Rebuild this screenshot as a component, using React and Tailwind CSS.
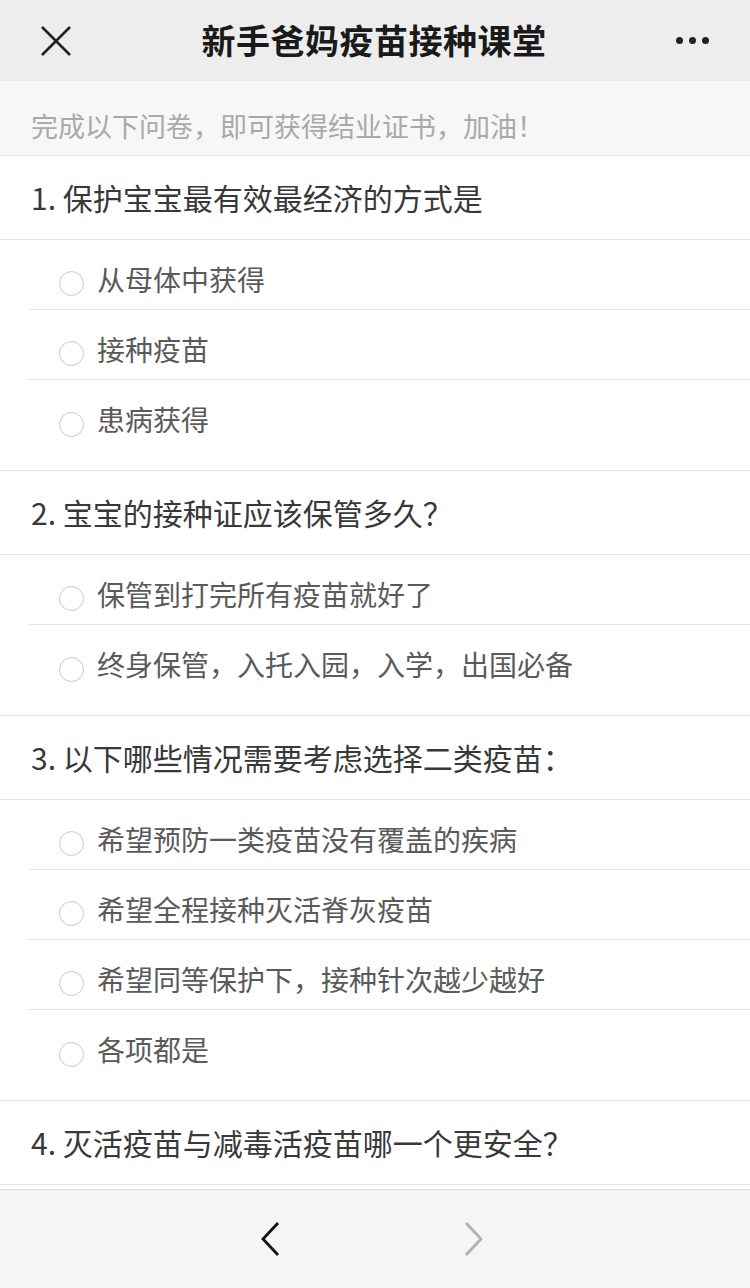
import React from 'react'

const questions = [
  {
    title: '1. 保护宝宝最有效最经济的方式是',
    options: ['从母体中获得', '接种疫苗', '患病获得'],
  },
  {
    title: '2. 宝宝的接种证应该保管多久？',
    options: ['保管到打完所有疫苗就好了', '终身保管，入托入园，入学，出国必备'],
  },
  {
    title: '3. 以下哪些情况需要考虑选择二类疫苗：',
    options: ['希望预防一类疫苗没有覆盖的疾病', '希望全程接种灭活脊灰疫苗', '希望同等保护下，接种针次越少越好', '各项都是'],
  },
  {
    title: '4. 灭活疫苗与减毒活疫苗哪一个更安全？',
    options: [],
  },
]

function Question({ q, last }) {
  return (
    <div className={last ? '' : 'border-b border-[#e3e3e3]'}>
      <div className="h-[84px] flex items-center px-[31px] text-[30px] text-[#383838] border-b border-[#e6e6e6]">
        {q.title}
      </div>
      {q.options.length > 0 && (
        <div className="pb-[20px]">
          {q.options.map((o, i) => (
            <div key={i} className={'ml-[28px] h-[70px] flex items-center pt-[8px] ' + (i < q.options.length - 1 ? 'border-b border-[#e6e6e6]' : '')}>
              <span className="ml-[31px] mt-[10px] w-[25px] h-[25px] rounded-full border-[1.5px] border-[#c9c9c9] shrink-0"></span>
              <span className="ml-[13px] text-[28px] text-[#5a5a5a]">{o}</span>
            </div>
          ))}
        </div>
      )}
    </div>
  )
}

export default function App() {
  return (
    <div className="w-[750px] h-[1288px] flex flex-col bg-white overflow-hidden" style={{ fontFamily: '"Noto Sans CJK SC", "Noto Sans", sans-serif' }}>
      {/* Header */}
      <div className="h-[81px] shrink-0 bg-[#ededed] flex items-center justify-between px-[40px]">
        <svg width="32" height="32" viewBox="0 0 32 32">
          <path d="M2 2 L30 30 M30 2 L2 30" stroke="#222" strokeWidth="2.6" fill="none" />
        </svg>
        <div className="text-[34px] font-bold text-[#1a1a1a] tracking-[0.5px] -mt-[2px]">新手爸妈疫苗接种课堂</div>
        <div className="flex gap-[6px] w-[34px]">
          <span className="w-[7px] h-[7px] rounded-full bg-[#222]"></span>
          <span className="w-[7px] h-[7px] rounded-full bg-[#222]"></span>
          <span className="w-[7px] h-[7px] rounded-full bg-[#222]"></span>
        </div>
      </div>
      {/* Subtitle */}
      <div className="h-[75px] shrink-0 bg-[#f7f7f7] border-b border-[#e4e4e4] flex items-center px-[31px] pt-[16px] text-[27px] text-[#a9a9a9]">
        完成以下问卷，即可获得结业证书，加油！
      </div>
      {/* Questions */}
      <div className="flex-1 overflow-hidden">
        {questions.map((q, i) => (
          <Question key={i} q={q} last={i === questions.length - 1} />
        ))}
        <div className="h-[6px]"></div>
      </div>
      {/* Bottom bar */}
      <div className="h-[99px] shrink-0 bg-[#f5f5f5] border-t border-[#dcdcdc] flex items-center justify-center gap-[182px] pr-[6px]">
        <svg width="22" height="36" viewBox="0 0 22 36">
          <path d="M19 2 L4 18 L19 34" stroke="#111" strokeWidth="2.8" fill="none" />
        </svg>
        <svg width="22" height="36" viewBox="0 0 22 36">
          <path d="M3 2 L18 18 L3 34" stroke="#b0b0b0" strokeWidth="2.8" fill="none" />
        </svg>
      </div>
    </div>
  )
}
